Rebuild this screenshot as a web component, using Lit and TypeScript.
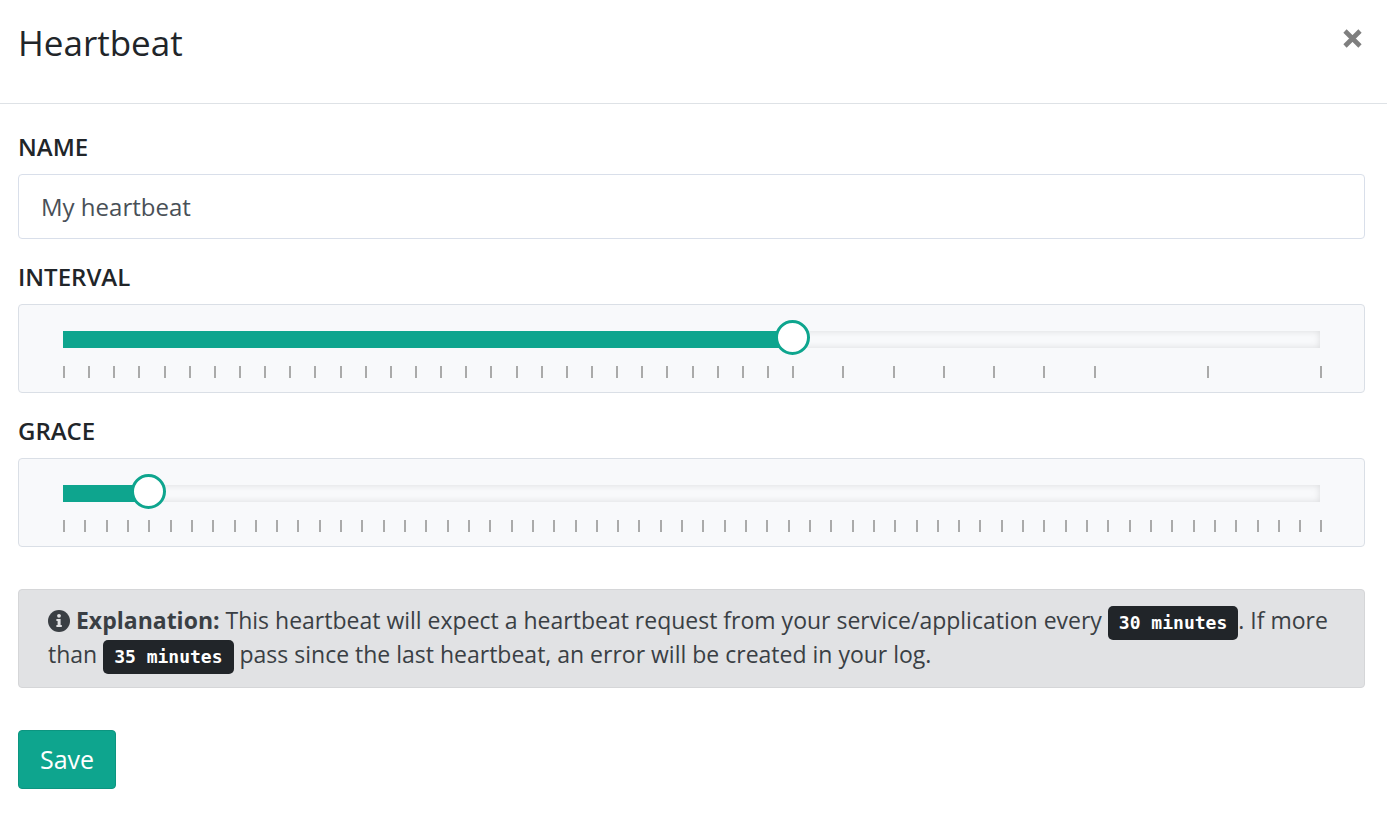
import { LitElement, html, css } from "lit";
import { customElement, property, state } from "lit/decorators.js";
import { live } from "lit/directives/live.js";

interface Stop {
  at: number;
  minutes: number;
}

// The first half hour is selectable by the minute, the rest in coarser steps.
const INTERVAL_STOPS: Stop[] = [
  ...Array.from({ length: 30 }, (_, i) => ({ at: i * 2, minutes: i + 1 })),
  ...Array.from({ length: 6 }, (_, i) => ({ at: 62 + i * 4, minutes: 35 + i * 5 })),
  { at: 91, minutes: 120 },
  { at: 100, minutes: 180 },
];

const GRACE_STOPS: Stop[] = Array.from({ length: 60 }, (_, i) => ({
  at: (i * 100) / 59,
  minutes: i + 1,
}));

const labelStyles = css`
  .name {
    display: block;
    margin-bottom: 11px;
    font-size: 24px;
    line-height: 32px;
    font-weight: 600;
  }
`;

@customElement("stop-slider")
export class StopSlider extends LitElement {
  @property({ attribute: false }) stops: Stop[] = [];
  @property({ type: Number }) minutes = 1;
  @property() label = "";

  static styles = [
    labelStyles,
    css`
      :host {
        display: block;
      }
      .panel {
        box-sizing: border-box;
        padding: 15px 44px 14px;
        border: 1px solid #dadfe6;
        border-radius: 4px;
        background: #f8f9fb;
      }
      .control {
        display: grid;
      }
      .rail,
      .range {
        grid-area: 1 / 1;
      }
      .rail {
        height: 17px;
        margin-top: 11px;
        box-shadow: inset 0 0 7px rgba(0, 0, 0, 0.12);
      }
      .fill {
        height: 100%;
        background: #0ea58e;
      }
      .range {
        appearance: none;
        height: 35px;
        margin: 0 -18px 0 -17px;
        background: transparent;
        cursor: pointer;
      }
      .range::-webkit-slider-thumb {
        appearance: none;
        box-sizing: border-box;
        width: 35px;
        height: 35px;
        border: 3px solid #0ea58e;
        border-radius: 50%;
        background: #fff;
      }
      .ticks {
        display: flex;
        margin-top: 11px;
      }
      .tick {
        min-width: 0;
      }
      .tick::before {
        content: "";
        display: block;
        width: 2px;
        height: 12px;
        background: #aaa;
      }
    `,
  ];

  private onInput(event: Event) {
    const value = Number((event.target as HTMLInputElement).value);
    const nearest = this.stops.reduce((best, stop) =>
      Math.abs(stop.at - value) < Math.abs(best.at - value) ? stop : best
    );
    this.minutes = nearest.minutes;
    this.requestUpdate();
    this.dispatchEvent(new CustomEvent("change-minutes", { detail: nearest.minutes }));
  }

  render() {
    const current = this.stops.find((stop) => stop.minutes === this.minutes);
    const at = current ? current.at : 0;
    return html`
      <label class="name" for="range">${this.label}</label>
      <div class="panel">
        <div class="control">
          <div class="rail"><div class="fill" style="width: ${at}%"></div></div>
          <input
            class="range"
            id="range"
            type="range"
            min="0"
            max="100"
            step="any"
            aria-valuetext="${this.minutes} minutes"
            .value=${live(String(at))}
            @input=${this.onInput}
          />
        </div>
        <div class="ticks" aria-hidden="true">
          ${this.stops.map((stop, i) => {
            const next = this.stops[i + 1];
            return html`<span class="tick" style="flex: ${next ? next.at - stop.at : 0} 1 0px"></span>`;
          })}
        </div>
      </div>
    `;
  }
}

@customElement("app-root")
export class AppRoot extends LitElement {
  @state() private interval = 30;
  @state() private grace = 5;

  static styles = [
    labelStyles,
    css`
      :host {
        display: block;
        min-height: 100vh;
        background: #fff;
        color: #212529;
        font-family: "Open Sans", "Noto Sans", sans-serif;
      }
      .header {
        display: flex;
        justify-content: space-between;
        align-items: flex-start;
        padding: 18px 22px 35px 18px;
        border-bottom: 1px solid #dee2e6;
      }
      .title {
        margin: 0;
        font-size: 35px;
        line-height: 50px;
        font-weight: 400;
      }
      .close {
        display: flex;
        margin-top: 8px;
        padding: 0;
        border: 0;
        background: none;
        color: #7f7f7f;
        cursor: pointer;
      }
      .form {
        display: flex;
        flex-direction: column;
        gap: 22px;
        padding: 27px 22px 31px 18px;
      }
      .text {
        display: block;
        box-sizing: border-box;
        width: 100%;
        height: 65px;
        padding: 0 22px 1px;
        border: 1px solid #d9dfea;
        border-radius: 4px;
        background: #fff;
        color: #495057;
        font: inherit;
        font-size: 24px;
      }
      .note {
        margin: 20px 0;
        padding: 13px 29px 16px;
        border: 1px solid #d5d6d8;
        border-radius: 4px;
        background: #e1e2e4;
        color: #3a3f44;
        font-size: 23px;
        line-height: 34px;
      }
      .info {
        width: 22px;
        height: 22px;
        vertical-align: -3px;
      }
      .strong {
        font-weight: 700;
      }
      .value {
        padding: 6px 11px 7px;
        border-radius: 5px;
        background: #212529;
        color: #fff;
        font-family: "DejaVu Sans Mono", monospace;
        font-size: 18px;
        line-height: 18px;
        font-weight: 700;
        white-space: nowrap;
      }
      .save {
        align-self: flex-start;
        height: 59px;
        padding: 0 21px 1px;
        border: 1px solid #0c9580;
        border-radius: 4px;
        background: #0ea58e;
        color: #fff;
        font: inherit;
        font-size: 25px;
        cursor: pointer;
      }
    `,
  ];

  render() {
    return html`
      <header class="header">
        <h1 class="title">Heartbeat</h1>
        <button class="close" type="button" aria-label="Close">
          <svg width="25" height="25" viewBox="0 0 25 25" aria-hidden="true">
            <path d="M5 5 20 20M20 5 5 20" stroke="currentColor" stroke-width="4.6" />
          </svg>
        </button>
      </header>
      <form class="form" @submit=${(e: Event) => e.preventDefault()}>
        <div>
          <label class="name" for="name">NAME</label>
          <input class="text" id="name" type="text" value="My heartbeat" />
        </div>
        <stop-slider
          label="INTERVAL"
          .stops=${INTERVAL_STOPS}
          .minutes=${this.interval}
          @change-minutes=${(e: CustomEvent<number>) => (this.interval = e.detail)}
        ></stop-slider>
        <stop-slider
          label="GRACE"
          .stops=${GRACE_STOPS}
          .minutes=${this.grace}
          @change-minutes=${(e: CustomEvent<number>) => (this.grace = e.detail)}
        ></stop-slider>
        <div class="note">
          <svg class="info" viewBox="0 0 22 22" aria-hidden="true">
            <circle cx="11" cy="11" r="11" fill="currentColor" />
            <circle cx="11" cy="5.8" r="1.9" fill="#e1e2e4" />
            <path d="M8.4 9H12.6V14.9H13.8V17H8.4V14.9H9.6V11.1H8.4Z" fill="#e1e2e4" />
          </svg>
          <strong class="strong">Explanation:</strong> This heartbeat will expect a heartbeat request
          from your service/application every
          <code class="value">${`${this.interval} minutes`}</code>. If more than
          <code class="value">${`${this.interval + this.grace} minutes`}</code> pass since the last
          heartbeat, an error will be created in your log.
        </div>
        <button class="save" type="submit">Save</button>
      </form>
    `;
  }
}
